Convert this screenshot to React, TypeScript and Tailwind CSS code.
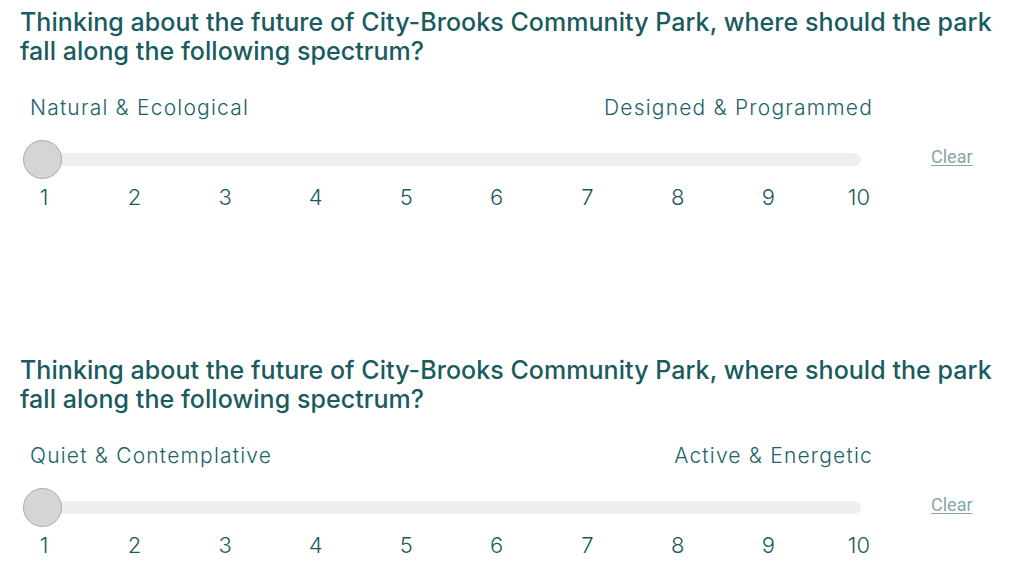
import React from "react";

type Question = {
  id: string;
  prompt: string;
  left: string;
  right: string;
};

const questions: Question[] = [
  {
    id: "natural",
    prompt:
      "Thinking about the future of City-Brooks Community Park, where should the park fall along the following spectrum?",
    left: "Natural & Ecological",
    right: "Designed & Programmed",
  },
  {
    id: "quiet",
    prompt:
      "Thinking about the future of City-Brooks Community Park, where should the park fall along the following spectrum?",
    left: "Quiet & Contemplative",
    right: "Active & Energetic",
  },
];

const ticks = [1, 2, 3, 4, 5, 6, 7, 8, 9, 10];

const SpectrumSlider = ({ q }: { q: Question }) => {
  return (
    <div className="h-[348px]">
      {/* QUESTION */}
      <h2 className="w-[985px] text-[25px] leading-[29px] font-medium text-[#1a5b60] tracking-[0.05px]">
        {q.prompt}
      </h2>

      {/* END LABELS */}
      <div className="mt-[28px] ml-[10px] w-[843px] flex justify-between text-[21px] leading-[28px] font-light text-[#20626a] tracking-[1.2px]">
        <span>{q.left}</span>
        <span>{q.right}</span>
      </div>

      {/* TRACK + CLEAR */}
      <div className="mt-[18px] flex items-center h-[39px]">
        <div className="relative ml-[3px] w-[838px] h-[39px] flex items-center">
          <div className="w-full h-[13px] rounded-full bg-[#efefef]" />
          <div className="absolute left-0 top-0 w-[39px] h-[39px] rounded-full bg-[#d5d5d5] border-[1.5px] border-[#a9a9a9]" />
        </div>
        <button
          type="button"
          className="ml-[70px] -mt-[7px] text-[18px] text-[#86a8a9] underline underline-offset-2 font-['Roboto',sans-serif]"
        >
          Clear
        </button>
      </div>

      {/* TICK NUMBERS */}
      <div className="ml-[4px] w-[855px] flex justify-between text-[22px] leading-[36px] font-light text-[#1a5b60]">
        {ticks.map((t) => (
          <span key={t} className="w-[40px] text-center">
            {t}
          </span>
        ))}
      </div>
    </div>
  );
};

export default function App() {
  return (
    <div className="w-[1029px] h-[580px] overflow-hidden bg-white pl-[20px] pt-[8px] font-['Inter','Noto_Sans',sans-serif]">
      {questions.map((q) => (
        <SpectrumSlider key={q.id} q={q} />
      ))}
    </div>
  );
}
